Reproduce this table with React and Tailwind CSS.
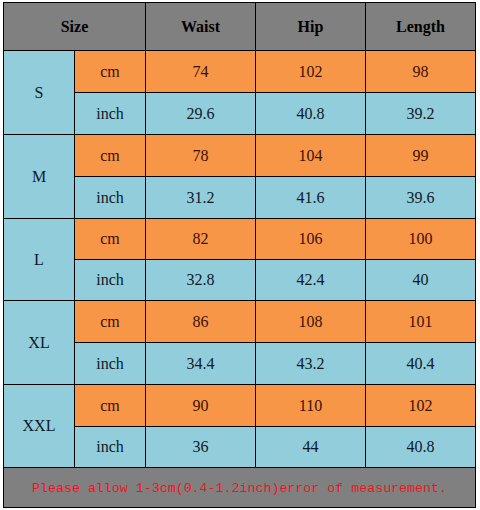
import React from "react";

const rows = [
  { s: "S", cm: ["74", "102", "98"], inch: ["29.6", "40.8", "39.2"] },
  { s: "M", cm: ["78", "104", "99"], inch: ["31.2", "41.6", "39.6"] },
  { s: "L", cm: ["82", "106", "100"], inch: ["32.8", "42.4", "40"] },
  { s: "XL", cm: ["86", "108", "101"], inch: ["34.4", "43.2", "40.4"] },
  { s: "XXL", cm: ["90", "110", "102"], inch: ["36", "44", "40.8"] },
];

const cell = "flex items-center justify-center font-['Liberation_Serif','Times_New_Roman','DejaVu_Serif',serif]";
const orange = `${cell} bg-[#f79646] text-[#3d1005]`;
const blue = `${cell} bg-[#92cddc] text-[#0d1a26]`;
const head = `${cell} bg-[#808080] text-black font-bold`;

export default function App() {
  return (
    <div className="w-[480px] h-[510px] bg-white pt-[2px] pl-[3px]">
      <div className="grid w-[473px] grid-cols-[70px_70px_109px_109px_109px] grid-rows-[47px_41px_41px_41px_41px_40px_40px_41px_41px_41px_40px_39px] gap-px bg-black border border-black text-[16px]">
        <div className={`${head} col-span-2`}>Size</div>
        <div className={head}>Waist</div>
        <div className={head}>Hip</div>
        <div className={head}>Length</div>
        {rows.map((r) => (
          <React.Fragment key={r.s}>
            <div className={`${blue} row-span-2`}>{r.s}</div>
            <div className={orange}>cm</div>
            {r.cm.map((v, i) => (
              <div key={"c" + i} className={orange}>{v}</div>
            ))}
            <div className={blue}>inch</div>
            {r.inch.map((v, i) => (
              <div key={"i" + i} className={blue}>{v}</div>
            ))}
          </React.Fragment>
        ))}
        <div className="col-span-5 flex items-center justify-center bg-[#808080] text-[#f0141e] text-[13.3px] pt-[2px] font-['Liberation_Mono',monospace]">
          Please allow 1-3cm(0.4-1.2inch)error of measurement.
        </div>
      </div>
    </div>
  );
}
